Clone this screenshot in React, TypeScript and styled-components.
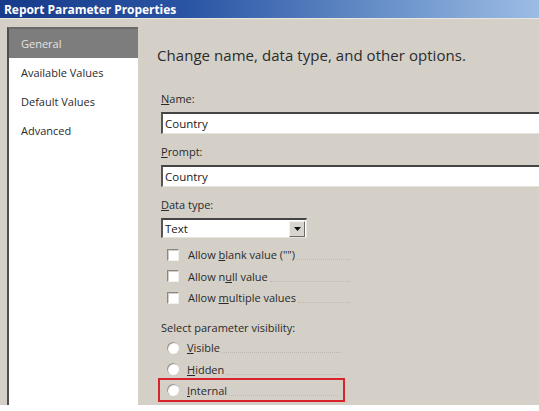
import React from "react";
import styled, { createGlobalStyle } from "styled-components";

const Global = createGlobalStyle`
  html, body { margin: 0; padding: 0; background: #ffffff; overflow: hidden; }
  body { font-family: "Open Sans", "Noto Sans", sans-serif; }
  * { box-sizing: border-box; }
`;

const Window = styled.div`
  width: 539px;
  height: 405px;
  background: #d4d0c8;
  display: flex;
  flex-direction: column;
  overflow: hidden;
`;

const TitleBar = styled.div`
  height: 19px;
  flex: none;
  display: flex;
  align-items: center;
  padding-left: 4px;
  background: linear-gradient(90deg, #173a8a 0%, #2a55a4 35%, #6f96cc 75%, #9cbce4 100%);
  color: #ffffff;
  font-weight: 700;
  font-size: 12px;
  letter-spacing: -0.05px;
  border-bottom: 1px solid #e8e6e0;
`;

const Body = styled.div`
  flex: 1;
  display: flex;
  min-height: 0;
`;

const Sidebar = styled.div`
  width: 131px;
  margin: 8px 0 0 7px;
  background: #ffffff;
  border-left: 2px solid #4e4e4e;
  border-top: 2px solid #6a6a6a;
  display: flex;
  flex-direction: column;
  flex: none;
`;

const NavItem = styled.div<{ $active?: boolean }>`
  height: 29px;
  display: flex;
  align-items: center;
  padding-left: 12px;
  font-size: 11px;
  color: ${(p) => (p.$active ? "#e4e4e4" : "#2a2a2a")};
  background: ${(p) => (p.$active ? "#7d7d7d" : "transparent")};
`;

const Content = styled.div`
  flex: 1;
  display: flex;
  flex-direction: column;
  padding-left: 19px;
  min-width: 0;
`;

const Heading = styled.div`
  font-size: 15px;
  color: #2b2b2b;
  margin-top: 25px;
  height: 22px;
  line-height: 22px;
  letter-spacing: 0.05px;
`;

const Form = styled.div`
  display: flex;
  flex-direction: column;
  padding-left: 4px;
`;

const Label = styled.div<{ $top: number }>`
  font-size: 11px;
  color: #2a2a2a;
  height: 15px;
  line-height: 15px;
  margin-top: ${(p) => p.$top}px;
  margin-bottom: 6px;
  u { text-decoration: underline; }
`;

const TextBox = styled.div`
  height: 22px;
  width: 420px;
  background: #ffffff;
  border-top: 2px solid #444444;
  border-left: 2px solid #555555;
  border-bottom: 1px solid #e6e3dd;
  display: flex;
  align-items: center;
  padding-left: 2px;
  font-size: 11.5px;
  color: #1a1a1a;
`;

const Select = styled.div`
  height: 20px;
  width: 146px;
  background: #ffffff;
  border-top: 2px solid #444444;
  border-left: 2px solid #555555;
  border-bottom: 1px solid #e6e3dd;
  border-right: 1px solid #e6e3dd;
  display: flex;
  align-items: center;
  padding-left: 2px;
  font-size: 11.5px;
  color: #1a1a1a;
`;

const SelectText = styled.span`
  flex: 1;
`;

const DropButton = styled.div`
  width: 16px;
  height: 16px;
  margin-right: 1px;
  background: #d8d5cf;
  border-top: 1px solid #f4f3f0;
  border-left: 1px solid #f4f3f0;
  border-right: 1px solid #6c6a66;
  border-bottom: 1px solid #6c6a66;
  display: flex;
  align-items: center;
  justify-content: center;
`;

const Options = styled.div<{ $top: number }>`
  display: flex;
  flex-direction: column;
  margin-top: ${(p) => p.$top}px;
  gap: 8.5px;
`;

const OptionRow = styled.div<{ $width: number }>`
  display: flex;
  align-items: center;
  width: ${(p) => p.$width}px;
  height: 13px;
  padding-left: 6px;
  font-size: 11px;
  color: #2a2a2a;
`;

const CheckBox = styled.span`
  width: 12px;
  height: 12px;
  flex: none;
  background: #ffffff;
  border-top: 1px solid #8a8884;
  border-left: 1px solid #8a8884;
  border-right: 1px solid #f2f0ec;
  border-bottom: 1px solid #f2f0ec;
  box-shadow: inset 1px 1px 0 #d0cdc6;
  margin-right: 9px;
`;

const Radio = styled.span`
  width: 12px;
  height: 12px;
  flex: none;
  border-radius: 50%;
  background: radial-gradient(circle at 60% 60%, #ffffff 0%, #ffffff 45%, #e8e6e2 75%, #b9b6b0 100%);
  box-shadow: inset 1px 1px 0 #9a9792;
  margin-right: 8px;
`;

const OptionText = styled.span`
  flex: none;
  white-space: nowrap;
  line-height: 13px;
  padding-right: 2px;
`;

const Dots = styled.span`
  flex: 1;
  align-self: flex-end;
  margin-bottom: 1px;
  border-bottom: 1px dotted #bcb8b0;
`;

const Highlight = styled.div`
  margin-left: -3px;
  margin-top: -6px;
  width: 187px;
  height: 24px;
  border: 2px solid #d8232d;
  display: flex;
  align-items: center;
  padding-left: 7px;
`;

const InnerRow = styled.div`
  display: flex;
  align-items: center;
  flex: 1;
  height: 13px;
  font-size: 11px;
  color: #2a2a2a;
  padding-right: 5px;
`;

export default function App() {
  return (
    <>
      <Global />
      <Window>
        <TitleBar>Report Parameter Properties</TitleBar>
        <Body>
          <Sidebar>
            <NavItem $active>General</NavItem>
            <NavItem>Available Values</NavItem>
            <NavItem>Default Values</NavItem>
            <NavItem>Advanced</NavItem>
          </Sidebar>
          <Content>
            <Heading>Change name, data type, and other options.</Heading>
            <Form>
              <Label $top={25}>
                <u>N</u>ame:
              </Label>
              <TextBox>Country</TextBox>
              <Label $top={10}>
                <u>P</u>rompt:
              </Label>
              <TextBox>Country</TextBox>
              <Label $top={10}>
                <u>D</u>ata type:
              </Label>
              <Select>
                <SelectText>Text</SelectText>
                <DropButton>
                  <svg width="7" height="4" viewBox="0 0 7 4">
                    <path d="M0 0h7L3.5 4z" fill="#111" />
                  </svg>
                </DropButton>
              </Select>
              <Options $top={10}>
                <OptionRow $width={189}>
                  <CheckBox />
                  <OptionText>
                    Allow <u>b</u>lank value ("")
                  </OptionText>
                  <Dots />
                </OptionRow>
                <OptionRow $width={189}>
                  <CheckBox />
                  <OptionText>
                    Allow n<u>u</u>ll value
                  </OptionText>
                  <Dots />
                </OptionRow>
                <OptionRow $width={189}>
                  <CheckBox />
                  <OptionText>
                    Allow <u>m</u>ultiple values
                  </OptionText>
                  <Dots />
                </OptionRow>
              </Options>
              <Label $top={16}>Select parameter visibility:</Label>
              <Options $top={0}>
                <OptionRow $width={180}>
                  <Radio />
                  <OptionText>
                    <u>V</u>isible
                  </OptionText>
                  <Dots />
                </OptionRow>
                <OptionRow $width={180}>
                  <Radio />
                  <OptionText>
                    <u>H</u>idden
                  </OptionText>
                  <Dots />
                </OptionRow>
                <Highlight>
                  <InnerRow>
                    <Radio />
                    <OptionText>
                      <u>I</u>nternal
                    </OptionText>
                    <Dots />
                  </InnerRow>
                </Highlight>
              </Options>
            </Form>
          </Content>
        </Body>
      </Window>
    </>
  );
}
